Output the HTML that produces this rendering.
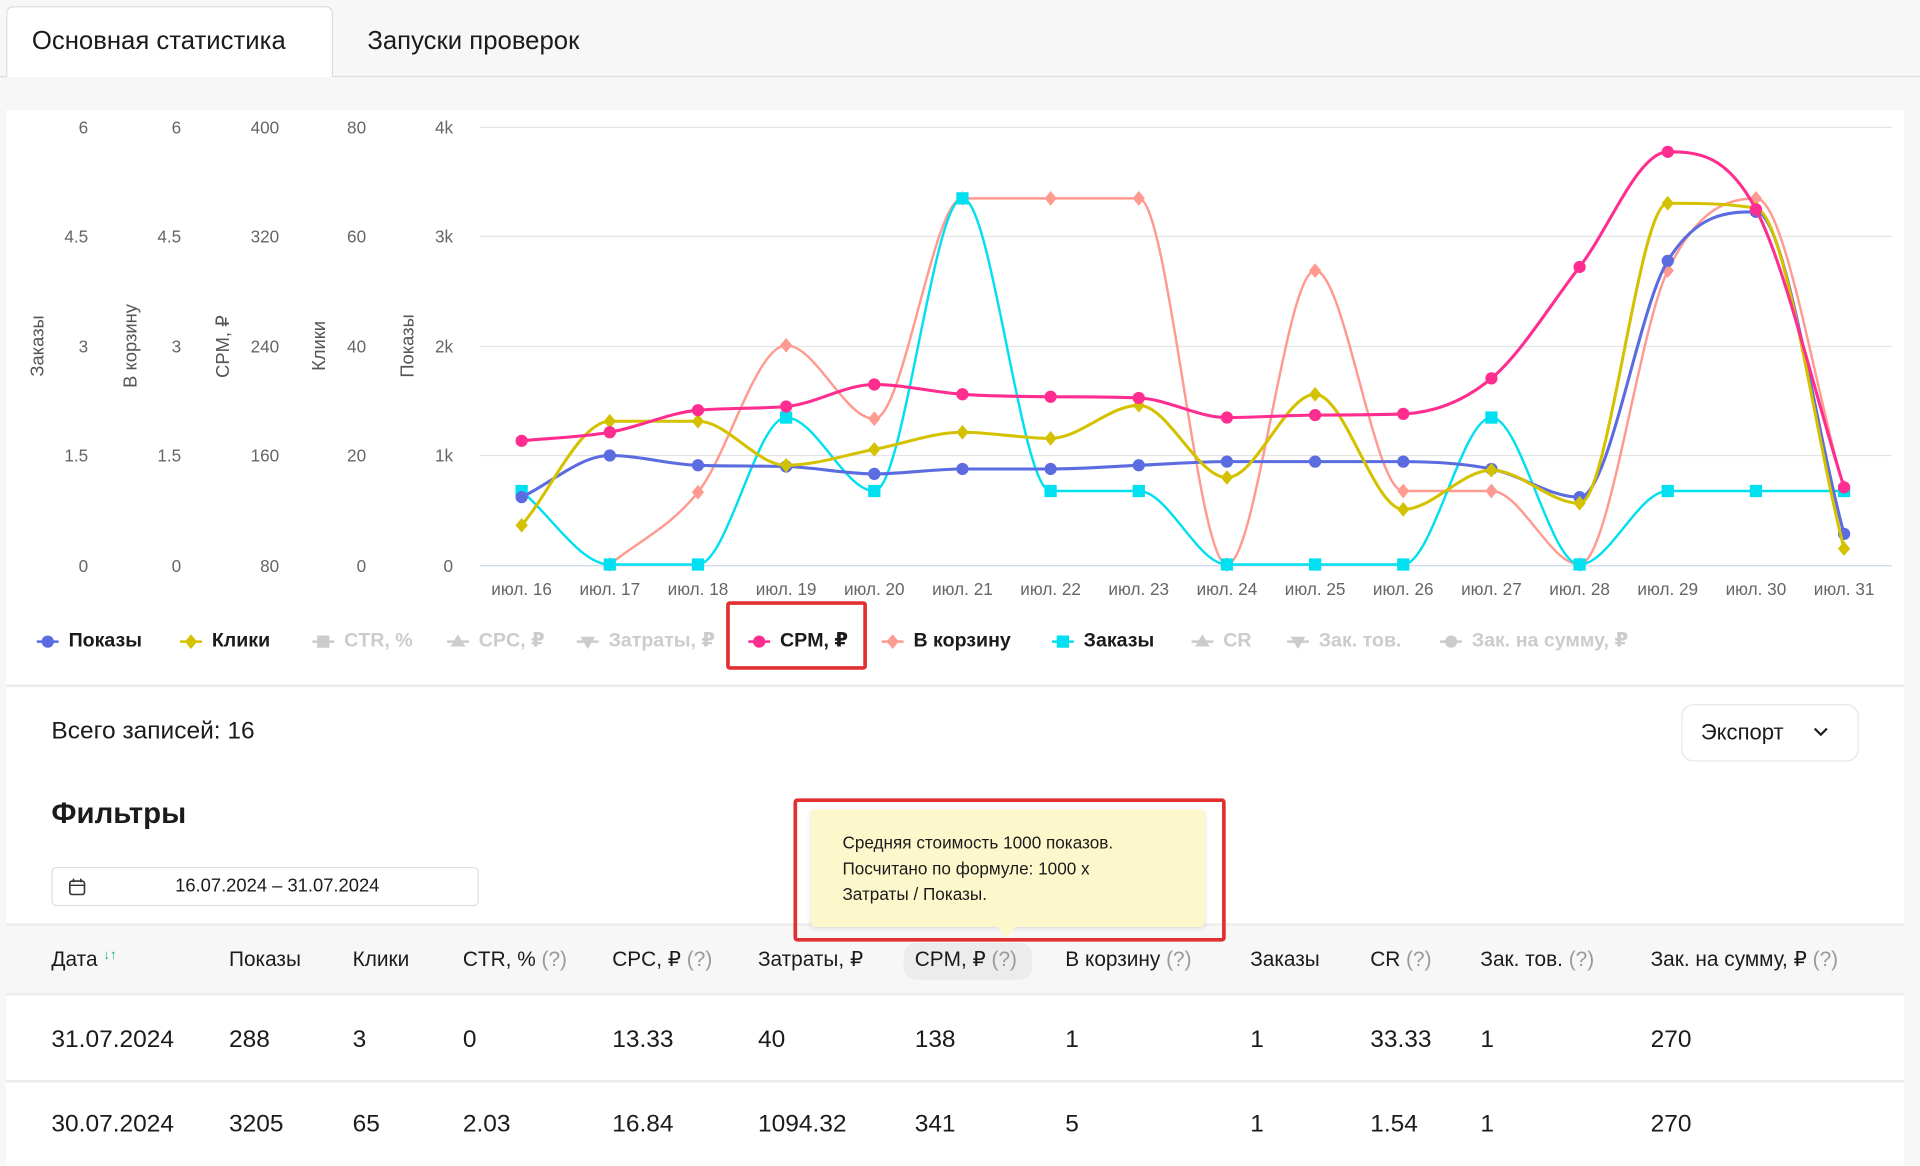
<!DOCTYPE html>
<html><head><meta charset="utf-8">
<style>
*{box-sizing:border-box;margin:0;padding:0}
html,body{width:1920px;height:1166px;overflow:hidden;background:#f7f7f7}
#w{position:absolute;left:0;top:0;width:1568px;height:952px;transform:scale(1.22449);transform-origin:0 0;font-family:"Liberation Sans","DejaVu Sans",sans-serif;color:#1b1b1b}
.a{position:absolute;white-space:nowrap}
.tab{position:absolute;top:5px;height:58px;font-size:21px;line-height:58px;padding-left:21px}
.ax{position:absolute;font-size:14px;color:#666;text-align:right;width:40px}
.rt{position:absolute;font-size:15px;color:#555;transform:rotate(-90deg);transform-origin:center;white-space:nowrap;width:120px;text-align:center}
.xl{position:absolute;top:473px;font-size:14px;color:#666;width:80px;text-align:center}
.lg{position:absolute;top:514px;font-size:16px;font-weight:bold;white-space:nowrap;line-height:20px}
.lg svg{vertical-align:-3px;margin-right:8px}
.lg.off{color:#ccc}
.th{position:absolute;top:774px;font-size:17px;white-space:nowrap}
.q{color:#999}
.td{position:absolute;font-size:20px;white-space:nowrap}
</style></head><body><div id="w">
<div style="position:absolute;left:0;top:62px;width:1568px;height:1px;background:#ddd"></div>
<div style="position:absolute;left:5px;top:5px;width:267px;height:58px;background:#fff;border:1px solid #ddd;border-bottom:none;border-radius:6px 6px 0 0"></div>
<div class="tab" style="left:5px">Основная статистика</div>
<div class="tab" style="left:279px">Запуски проверок</div>
<div style="position:absolute;left:5px;top:90px;width:1550px;height:862px;background:#fff"></div>
<svg class="a" style="left:0;top:0" width="1568" height="560" id="ch">
<g stroke="#e4e4e4" stroke-width="1">
<line x1="392" x2="1545" y1="104" y2="104"/><line x1="392" x2="1545" y1="193" y2="193"/><line x1="392" x2="1545" y1="283" y2="283"/><line x1="392" x2="1545" y1="372" y2="372"/><line x1="392" x2="1545" y1="462" y2="462" stroke="#ccd6eb"/></g>
</svg>
<div id="axes"></div>
<div class="rt" style="left:-29px;top:274px">Заказы</div>
<div class="rt" style="left:47px;top:274px">В корзину</div>
<div class="rt" style="left:122px;top:274px">CPM, ₽</div>
<div class="rt" style="left:201px;top:274px">Клики</div>
<div class="rt" style="left:273px;top:274px">Показы</div>
<div id="xl"></div>
<div id="lgs"></div>
<div class="a" style="left:593px;top:491px;width:115px;height:56px;border:3px solid #e03030;border-radius:3px"></div>
<div class="a" style="left:5px;top:559px;width:1550px;height:2px;background:#ececec"></div>
<div class="a" style="left:42px;top:586px;font-size:20px">Всего записей: 16</div>
<div class="a" style="left:1373px;top:575px;width:145px;height:47px;border:1px solid #e6e6e6;border-radius:10px;font-size:18px;line-height:45px;padding-left:15px">Экспорт
<svg style="position:absolute;left:106px;top:17px" width="14" height="10"><path d="M2 2 L7 7 L12 2" fill="none" stroke="#222" stroke-width="1.8"/></svg></div>
<div class="a" style="left:42px;top:651px;font-size:24px;font-weight:bold">Фильтры</div>
<div class="a" style="left:42px;top:708px;width:349px;height:32px;border:1px solid #ddd;border-radius:4px;font-size:15px;line-height:30px;padding-left:100px">16.07.2024 – 31.07.2024
<svg style="position:absolute;left:13px;top:8px" width="14" height="15"><rect x="1" y="2.5" width="12" height="11" rx="2" fill="none" stroke="#333" stroke-width="1.3"/><line x1="1" y1="6" x2="13" y2="6" stroke="#333" stroke-width="1.2"/><line x1="4" y1="0.5" x2="4" y2="3.5" stroke="#333" stroke-width="1.3"/><line x1="10" y1="0.5" x2="10" y2="3.5" stroke="#333" stroke-width="1.3"/></svg></div>
<div class="a" style="left:5px;top:754px;width:1550px;height:59px;background:#f7f7f7;border-top:2px solid #ececec;border-bottom:2px solid #ececec"></div>
<div class="a" style="left:738px;top:770px;width:105px;height:30px;background:#ececec;border-radius:10px"></div>
<div class="th" style="left:42px">Дата <span style="font-size:11px;color:#2a9;vertical-align:top">↓↑</span></div>
<div class="th" style="left:187px">Показы</div>
<div class="th" style="left:288px">Клики</div>
<div class="th" style="left:378px">CTR, % <span class="q">(?)</span></div>
<div class="th" style="left:500px">CPC, ₽ <span class="q">(?)</span></div>
<div class="th" style="left:619px">Затраты, ₽</div>
<div class="th" style="left:747px">CPM, ₽ <span class="q">(?)</span></div>
<div class="th" style="left:870px">В корзину <span class="q">(?)</span></div>
<div class="th" style="left:1021px">Заказы</div>
<div class="th" style="left:1119px">CR <span class="q">(?)</span></div>
<div class="th" style="left:1209px">Зак. тов. <span class="q">(?)</span></div>
<div class="th" style="left:1348px">Зак. на сумму, ₽ <span class="q">(?)</span></div>
<div class="a" style="left:5px;top:882px;width:1550px;height:2px;background:#ececec"></div>
<div id="rows"></div>
<div class="a" style="left:662px;top:661px;width:322px;height:96px;background:#fdf8cc;border-radius:4px;box-shadow:0 1px 4px rgba(0,0,0,.12);font-size:14px;line-height:21px;padding:17px 0 0 26px">Средняя стоимость 1000 показов.<br>Посчитано по формуле: 1000 x<br>Затраты / Показы.</div>
<div class="a" style="left:814px;top:756px;width:0;height:0;border-left:8px solid transparent;border-right:8px solid transparent;border-top:10px solid #fdf8cc"></div>
<div class="a" style="left:648px;top:652px;width:353px;height:117px;border:3px solid #e03030;border-radius:3px"></div>
</div>
<script>
function mk(t,c,x,y){if(t=='c')return '<circle cx="'+x+'" cy="'+y+'" r="5" fill="'+c+'"/>';if(t=='s')return '<rect x="'+(x-5)+'" y="'+(y-5)+'" width="10" height="10" fill="'+c+'"/>';if(t=='d')return '<path d="M'+x+','+(y-6)+' L'+(x+5)+','+y+' L'+x+','+(y+6)+' L'+(x-5)+','+y+'Z" fill="'+c+'"/>';if(t=='u')return '<path d="M'+x+','+(y-6)+' L'+(x+6)+','+(y+4)+' L'+(x-6)+','+(y+4)+'Z" fill="'+c+'"/>';return '<path d="M'+x+','+(y+6)+' L'+(x+6)+','+(y-4)+' L'+(x-6)+','+(y-4)+'Z" fill="'+c+'"/>';}
var L=[[30,'Показы','#5b6be0','c',0],[147,'Клики','#d4c200','d',0],[255,'CTR, %','#ccc','s',1],[365,'CPC, ₽','#ccc','u',1],[471,'Затраты, ₽','#ccc','v',1],[611,'CPM, ₽','#ff2d8f','c',0],[720,'В корзину','#ff9a90','d',0],[859,'Заказы','#00e0f0','s',0],[973,'CR','#ccc','u',1],[1051,'Зак. тов.','#ccc','v',1],[1176,'Зак. на сумму, ₽','#ccc','c',1]];
var h='';L.forEach(function(l){h+='<div class="lg'+(l[4]?' off':'')+'" style="left:'+l[0]+'px"><svg width="18" height="14"><line x1="0" y1="7" x2="18" y2="7" stroke="'+l[2]+'" stroke-width="2"/>'+mk(l[3],l[2],9,7)+'</svg>'+l[1]+'</div>'});
document.getElementById('lgs').innerHTML=h;
var ax=document.getElementById('axes');h='';
var cols=[[32,['6','4.5','3','1.5','0']],[108,['6','4.5','3','1.5','0']],[188,['400','320','240','160','80']],[259,['80','60','40','20','0']],[330,['4k','3k','2k','1k','0']]];
var ys=[104,193,283,372,462];
cols.forEach(function(c){c[1].forEach(function(t,i){h+='<div class="ax" style="left:'+c[0]+'px;top:'+(ys[i]-8)+'px">'+t+'</div>'})});
ax.innerHTML=h;
var xs=[];for(var i=0;i<16;i++)xs.push(426+72*i);
h='';xs.forEach(function(x,i){h+='<div class="xl" style="left:'+(x-40)+'px">июл. '+(16+i)+'</div>'});
document.getElementById('xl').innerHTML=h;
function mono(X,Y){var n=X.length,d=[],m=[];for(var i=0;i<n-1;i++)d.push((Y[i+1]-Y[i])/(X[i+1]-X[i]));
m[0]=d[0];m[n-1]=d[n-2];for(i=1;i<n-1;i++){m[i]=(d[i-1]*d[i]<=0)?0:(d[i-1]+d[i])/2;}
for(i=0;i<n-1;i++){if(d[i]==0){m[i]=0;m[i+1]=0;continue;}var a=m[i]/d[i],b=m[i+1]/d[i],s=a*a+b*b;if(s>9){var t=3/Math.sqrt(s);m[i]=t*a*d[i];m[i+1]=t*b*d[i];}}
var p='M'+X[0]+','+Y[0];for(i=0;i<n-1;i++){var dx=(X[i+1]-X[i])/3;p+=' C'+(X[i]+dx)+','+(Y[i]+m[i]*dx)+' '+(X[i+1]-dx)+','+(Y[i+1]-m[i+1]*dx)+' '+X[i+1]+','+Y[i+1];}return p;}
var S=[
['#ff9a90',2,'d',[461,461,402,282,342,162,162,162,461,221,401,401,461,221,162,398],1],
['#00e0f0',2,'s',[401,461,461,341,401,162,401,401,461,461,461,341,461,401,401,401],0],
['#5b6be0',2.5,'c',[406,372,380,381,387,383,383,380,377,377,377,383,406,213,173,436],0],
['#d4c200',2.5,'d',[429,344,344,380,367,353,358,331,390,322,416,384,411,166,170,448],0],
['#ff2d8f',2.5,'c',[360,353,335,332,314,322,324,325,341,339,338,309,218,124,171,398],0]];
var g='';
S.forEach(function(s){var X=xs.slice(s[4]),Y=s[3].slice(s[4]);g+='<path d="'+mono(X,Y)+'" fill="none" stroke="'+s[0]+'" stroke-width="'+s[1]+'"/>';
X.forEach(function(x,i){g+=mk(s[2],s[0],x,Y[i]);});});
document.getElementById('ch').insertAdjacentHTML('beforeend',g);
var R=[[849,['31.07.2024','288','3','0','13.33','40','138','1','1','33.33','1','270']],[918,['30.07.2024','3205','65','2.03','16.84','1094.32','341','5','1','1.54','1','270']]];
var cx=[42,187,288,378,500,619,747,870,1021,1119,1209,1348];h='';
R.forEach(function(r){r[1].forEach(function(t,i){h+='<div class="td" style="left:'+cx[i]+'px;top:'+(r[0]-11)+'px">'+t+'</div>'})});
document.getElementById('rows').innerHTML=h;
</script>
</body></html>
